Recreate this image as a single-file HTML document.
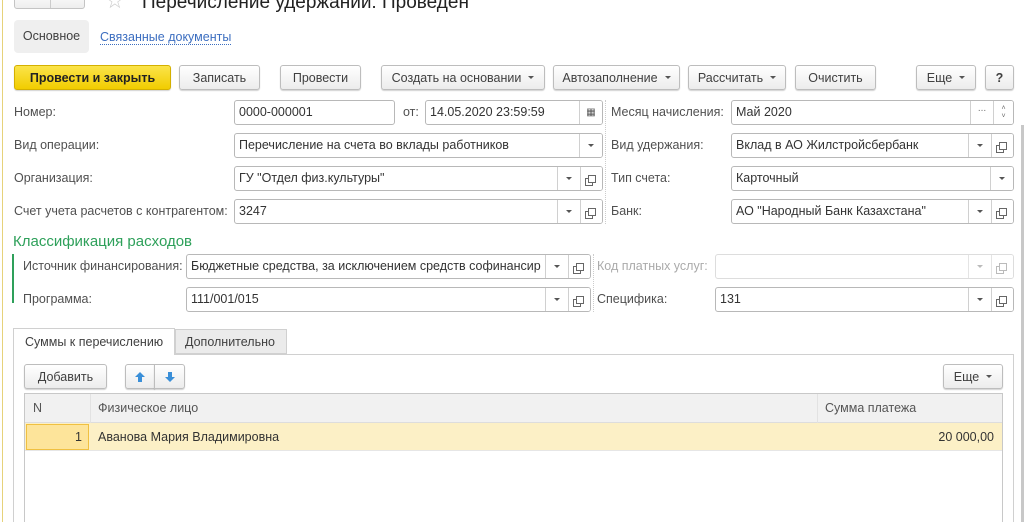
<!DOCTYPE html>
<html><head><meta charset="utf-8"><style>
*{box-sizing:border-box;margin:0;padding:0}
html{width:1024px;height:522px;overflow:hidden}
body{width:1024px;height:522px;overflow:hidden;background:#fff;font-family:"Liberation Sans",Arial,sans-serif;font-size:12.5px;color:#4a4a4a;position:relative}
.a{position:absolute}
.btn{position:absolute;height:25px;border:1px solid #bdbdbd;border-radius:3px;background:linear-gradient(#fff,#ececec);box-shadow:0 1px 1px rgba(0,0,0,.18);display:flex;align-items:center;justify-content:center;color:#404040;font-size:12.5px;white-space:nowrap}
.tri{display:inline-block;width:0;height:0;border-left:3px solid transparent;border-right:3px solid transparent;border-top:3px solid #555;margin-left:7px;vertical-align:middle}
.lbl{position:absolute;height:25px;line-height:25px;color:#505050;white-space:nowrap}
.inp{position:absolute;height:25px;border:1px solid #b8b8b8;border-radius:3px;background:#fff;color:#333;line-height:23px;padding-left:4px;white-space:nowrap;overflow:hidden}
.sb{position:absolute;top:0;height:23px;width:23px;border-left:1px solid #d0d0d0;background:#fff;display:flex;align-items:center;justify-content:center}
.dd::after{content:"";border-left:3px solid transparent;border-right:3px solid transparent;border-top:3px solid #555}
.op::after{content:"";width:6px;height:6px;border:1px solid #666;box-shadow:-3px 3px 0 -1px #fff,-3px 3px 0 0 #666}
.dis{color:#aaa;border-color:#ddd}
.dis .sb{border-color:#e4e4e4}
.dis .dd::after{border-top-color:#bbb}
.dis .op::after{border-color:#bbb;box-shadow:-3px 3px 0 -1px #fff,-3px 3px 0 0 #bbb}
.vd{position:absolute;width:0;border-left:1px dotted #ccc}
</style></head><body>
<div class="a" style="left:2px;top:0;width:1px;height:522px;background:#e6d27a"></div>
<div class="a" style="left:1021px;top:125px;width:3px;height:397px;background:#c8c8c8"></div>
<div class="a" style="left:14px;top:-10px;width:71px;height:19px;border:1px solid #c4c4c4;border-radius:3px;background:linear-gradient(#fff,#eee)"></div>
<div class="a" style="left:50px;top:-10px;width:1px;height:18px;background:#ccc"></div>
<div class="a" style="left:105px;top:-12px;font-size:22px;color:#ccc">☆</div>
<div class="a" style="left:142px;top:-8px;font-size:19px;color:#222">Перечисление удержаний: Проведен</div>
<div class="a" style="left:14px;top:20px;width:75px;height:33px;background:#efefef;border-radius:4px;line-height:33px;text-align:center;color:#404040">Основное</div>
<div class="a" style="left:100px;top:30px;color:#3c6ec0;border-bottom:1px dotted #3c6ec0;line-height:14px">Связанные документы</div>
<div class="btn" style="left:14px;top:65px;width:157px;background:linear-gradient(#fbe44a,#f1cd00);border-color:#d4b000;color:#222;font-weight:bold">Провести и закрыть</div>
<div class="btn" style="left:179px;top:65px;width:81px">Записать</div>
<div class="btn" style="left:280px;top:65px;width:81px">Провести</div>
<div class="btn" style="left:381px;top:65px;width:164px">Создать на основании<span class="tri"></span></div>
<div class="btn" style="left:553px;top:65px;width:127px">Автозаполнение<span class="tri"></span></div>
<div class="btn" style="left:688px;top:65px;width:98px">Рассчитать<span class="tri"></span></div>
<div class="btn" style="left:795px;top:65px;width:81px">Очистить</div>
<div class="btn" style="left:916px;top:65px;width:60px">Еще<span class="tri"></span></div>
<div class="btn" style="left:985px;top:65px;width:29px;font-weight:bold">?</div>
<div class="lbl" style="left:14px;top:100px">Номер:</div>
<div class="inp" style="left:234px;top:100px;width:161px">0000-000001</div>
<div class="lbl" style="left:403px;top:100px">от:</div>
<div class="inp" style="left:425px;top:100px;width:178px">14.05.2020 23:59:59<div class="sb" style="right:0;font-size:10px;color:#555">▦</div></div>
<div class="vd" style="left:605px;top:100px;height:124px"></div>
<div class="lbl" style="left:611px;top:100px">Месяц начисления:</div>
<div class="inp" style="left:731px;top:100px;width:283px">Май 2020<div class="sb" style="right:20px;width:23px;color:#777;font-size:10px;align-items:flex-end;padding-bottom:4px">...</div><div class="sb" style="right:0;width:20px;font-size:7px;color:#666;flex-direction:column;line-height:8px">˄<br>˅</div></div>
<div class="lbl" style="left:14px;top:133px">Вид операции:</div>
<div class="inp" style="left:234px;top:133px;width:369px">Перечисление на счета во вклады работников<div class="sb dd" style="right:0"></div></div>
<div class="lbl" style="left:611px;top:133px">Вид удержания:</div>
<div class="inp" style="left:731px;top:133px;width:283px">Вклад в АО Жилстройсбербанк<div class="sb dd" style="right:22px"></div><div class="sb op" style="right:0;width:22px"></div></div>
<div class="lbl" style="left:14px;top:166px">Организация:</div>
<div class="inp" style="left:234px;top:166px;width:369px">ГУ "Отдел физ.культуры"<div class="sb dd" style="right:22px"></div><div class="sb op" style="right:0;width:22px"></div></div>
<div class="lbl" style="left:611px;top:166px">Тип счета:</div>
<div class="inp" style="left:731px;top:166px;width:283px">Карточный<div class="sb dd" style="right:0"></div></div>
<div class="lbl" style="left:14px;top:199px">Счет учета расчетов с контрагентом:</div>
<div class="inp" style="left:234px;top:199px;width:369px">3247<div class="sb dd" style="right:22px"></div><div class="sb op" style="right:0;width:22px"></div></div>
<div class="lbl" style="left:611px;top:199px">Банк:</div>
<div class="inp" style="left:731px;top:199px;width:283px">АО "Народный Банк Казахстана"<div class="sb dd" style="right:22px"></div><div class="sb op" style="right:0;width:22px"></div></div>
<div class="a" style="left:13px;top:233px;font-size:15px;color:#2ea05a">Классификация расходов</div>
<div class="a" style="left:12px;top:254px;width:2px;height:49px;background:#2ea05a"></div>
<div class="lbl" style="left:23px;top:254px">Источник финансирования:</div>
<div class="inp" style="left:186px;top:254px;width:405px">Бюджетные средства, за исключением средств софинансир<div class="sb dd" style="right:22px"></div><div class="sb op" style="right:0;width:22px"></div></div>
<div class="vd" style="left:593px;top:254px;height:58px"></div>
<div class="lbl" style="left:597px;top:254px;color:#aaa">Код платных услуг:</div>
<div class="inp dis" style="left:715px;top:254px;width:299px"><div class="sb dd" style="right:22px"></div><div class="sb op" style="right:0;width:22px"></div></div>
<div class="lbl" style="left:23px;top:287px">Программа:</div>
<div class="inp" style="left:186px;top:287px;width:405px">111/001/015<div class="sb dd" style="right:22px"></div><div class="sb op" style="right:0;width:22px"></div></div>
<div class="lbl" style="left:597px;top:287px">Специфика:</div>
<div class="inp" style="left:715px;top:287px;width:299px">131<div class="sb dd" style="right:22px"></div><div class="sb op" style="right:0;width:22px"></div></div>
<div class="a" style="left:13px;top:354px;width:1001px;height:180px;border:1px solid #d0d0d0"></div>
<div class="a" style="left:13px;top:328px;width:162px;height:27px;border:1px solid #d0d0d0;border-bottom:none;background:#fff;line-height:26px;padding-left:11px;color:#404040">Суммы к перечислению</div>
<div class="a" style="left:175px;top:329px;width:112px;height:25px;border:1px solid #d0d0d0;background:#ebebeb;line-height:24px;padding-left:9px;color:#404040">Дополнительно</div>
<div class="btn" style="left:24px;top:364px;width:83px">Добавить</div>
<div class="btn" style="left:125px;top:364px;width:30px;border-radius:3px 0 0 3px"><svg width="12" height="12" viewBox="0 0 12 12"><path d="M6 1L11 6H8V11H4V6H1Z" fill="#3a8fd8"/></svg></div>
<div class="btn" style="left:154px;top:364px;width:31px;border-radius:0 3px 3px 0"><svg width="12" height="12" viewBox="0 0 12 12"><path d="M6 11L11 6H8V1H4V6H1Z" fill="#3a8fd8"/></svg></div>
<div class="btn" style="left:943px;top:364px;width:60px">Еще<span class="tri"></span></div>
<div class="a" style="left:24px;top:393px;width:979px;height:140px;border:1px solid #c8c8c8;border-bottom:none"></div>
<div class="a" style="left:25px;top:394px;width:977px;height:29px;background:#f1f1f1;border-bottom:1px solid #ddd"></div>
<div class="a" style="left:90px;top:394px;width:1px;height:57px;background:#e2e2e2"></div>
<div class="a" style="left:817px;top:394px;width:1px;height:57px;background:#e2e2e2"></div>
<div class="a" style="left:33px;top:401px;color:#555">N</div>
<div class="a" style="left:98px;top:401px;color:#555">Физическое лицо</div>
<div class="a" style="left:825px;top:401px;color:#555">Сумма платежа</div>
<div class="a" style="left:25px;top:423px;width:977px;height:28px;background:#fcf0c6;border-bottom:1px solid #e6e6e6"></div>
<div class="a" style="left:26px;top:424px;width:63px;height:26px;background:#fde49a;border:1px solid #f0c040;text-align:right;padding-right:6px;line-height:24px;color:#333">1</div>
<div class="a" style="left:98px;top:430px;color:#333">Аванова Мария Владимировна</div>
<div class="a" style="left:818px;top:430px;width:176px;text-align:right;color:#333">20 000,00</div>
</body></html>
